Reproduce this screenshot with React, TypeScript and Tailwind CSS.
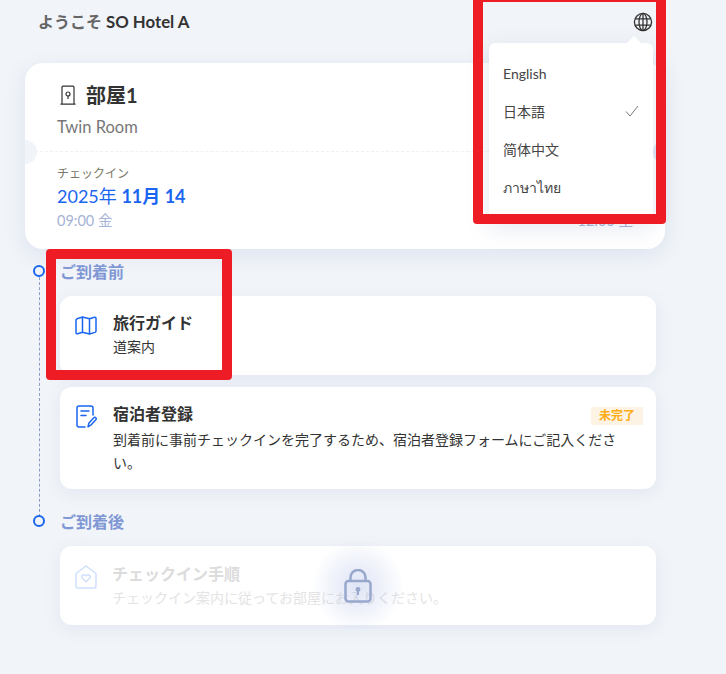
const FONT = "font-['Lato','Noto_Sans_CJK_JP',sans-serif]";

function Globe() {
  return (
    <svg width="20" height="20" viewBox="0 0 20 20" fill="none" stroke="#333" strokeWidth="1.3">
      <circle cx="10" cy="10" r="8.6" />
      <ellipse cx="10" cy="10" rx="4" ry="8.6" />
      <path d="M10 1.4v17.2M2.2 6.8h15.6M2.2 13.2h15.6" />
    </svg>
  );
}
function Door() {
  return (
    <svg width="16" height="20" viewBox="0 0 16 20" fill="none" stroke="#333" strokeWidth="1.2">
      <path d="M2 19V2.2a1 1 0 0 1 1-1h10a1 1 0 0 1 1 1V19M0.5 19.2h15" />
      <circle cx="8" cy="9" r="2" />
      <path d="M8 11v3" />
    </svg>
  );
}
function MapIcon() {
  return (
    <svg width="22" height="19" viewBox="0 0 22 19" fill="none" stroke="#1a66f0" strokeWidth="1.5" strokeLinejoin="round">
      <path d="M1 4.2c0-.8.5-1.300 1.200-1.500L7.500 1l7 1.800 5-1.600c.8-.2 1.500.3 1.500 1.100V15c0 .7-.4 1.200-1 1.400L14.500 18l-7-1.800-5 1.600C1.700 18 1 17.500 1 16.700zM7.500 1v15.200M14.500 2.800V18" />
    </svg>
  );
}
function FormIcon() {
  return (
    <svg width="21" height="23" viewBox="0 0 21 23" fill="none" stroke="#1a66f0" strokeWidth="1.5" strokeLinecap="round" strokeLinejoin="round">
      <path d="M9 22H3a2 2 0 0 1-2-2V3a2 2 0 0 1 2-2h12a2 2 0 0 1 2 2v7" />
      <path d="M5 6h8M5 10.500h5" />
      <path d="M12 21.800l.8-3.500 5-5.500c.6-.6 1.500-.6 2 0 .5.500.5 1.300 0 1.900l-5 5.500z" />
    </svg>
  );
}
function HouseHeart() {
  return (
    <svg width="22" height="24" viewBox="0 0 22 24" fill="none" stroke="#cfdffb" strokeWidth="1.5" strokeLinejoin="round">
      <path d="M1 8.500L11 1l10 7.500V21a2 2 0 0 1-2 2H3a2 2 0 0 1-2-2z" />
      <path d="M11 16.800l-3.700-3.600c-1.800-2 .9-4.700 3.700-2.400 2.800-2.300 5.500.4 3.700 2.400z" />
    </svg>
  );
}
function Lock() {
  return (
    <svg width="28" height="34" viewBox="0 0 28 34" fill="none" stroke="#98a7cc" strokeWidth="2.500">
      <rect x="1.500" y="12" width="25" height="20.500" rx="3" />
      <path d="M6.500 12V8.500a7.500 7.500 0 0 1 15 0V12" />
      <circle cx="14" cy="20.500" r="2.400" fill="#98a7cc" stroke="none" />
      <path d="M14 21v5" strokeWidth="2" />
    </svg>
  );
}

function Dot() {
  return <span className="absolute left-[-27px] top-[5px] h-3 w-3 rounded-full border-2 border-[#1a66f0] bg-[#f1f4f8]" />;
}

const shadow = "shadow-[0_4px_16px_rgba(120,140,200,0.12)]";

export default function App() {
  return (
    <div className={`relative h-[674px] w-[726px] overflow-hidden bg-[#f1f4f8] ${FONT}`}>
      <header className="flex h-[43px] items-center justify-between pl-[38px] pr-[73px]">
        <p className="text-[16px] font-semibold text-[#666]">
          ようこそ <span className="text-[16.800px] font-bold text-[#333]">SO Hotel A</span>
        </p>
        <div className="mt-[1px]"><Globe /></div>
      </header>

      <section className="relative mx-[25px] mt-[20px] h-[186px] w-[640px] rounded-[18px] bg-white shadow-[0_6px_20px_rgba(120,140,200,0.16)]">
        <div className="flex h-[89px] flex-col border-b border-dashed border-[#eef1f6] pl-[32px] pt-[19px]">
          <div className="flex items-center gap-[10px] pl-[3px]">
            <Door />
            <h1 className="text-[20px] leading-[26px] font-bold text-[#333]">部屋1</h1>
          </div>
          <p className="mt-[9px] text-[16.500px] leading-[20px] text-[#777]">Twin Room</p>
        </div>
        <span className="absolute left-0 top-[77px] h-6 w-3 rounded-r-full bg-[#f1f4f8]" />
        <span className="absolute right-0 top-[77px] h-6 w-3 rounded-l-full bg-[#dfe5f1]" />
        <div className="flex items-start justify-between pl-[32px] pr-[32px] pt-[15px]">
          <div>
            <p className="text-[12px] leading-[13px] text-[#776]">チェックイン</p>
            <p className="mt-[3px] text-[18px] leading-[26px] text-[#1a66f0]">
              2025年 <span className="font-bold">11月 14</span>
            </p>
            <p className="mt-[2px] text-[14.500px] leading-[20px] text-[#a7b3d6]">09:00 金</p>
          </div>
          <p className="mt-[44px] text-[14.500px] leading-[20px] text-[#a7b3d6]">12:00 土</p>
        </div>
      </section>

      <main className="relative ml-[60px] mr-[70px] mt-[11px]">
        <span className="absolute left-[-21px] top-[12px] h-[250px] border-l border-dashed border-[#8f9bc2]" />

        <div className="relative">
          <Dot />
          <h2 className="text-[16px] leading-[24px] font-bold text-[#7f97d4]">ご到着前</h2>
        </div>

        <article className={`mt-[12px] flex h-[79px] gap-[16px] rounded-[12px] bg-white pl-[15px] pt-[17px] ${shadow}`}>
          <div className="pt-[3px]"><MapIcon /></div>
          <div>
            <h3 className="text-[16px] leading-[20px] font-bold text-[#333]">旅行ガイド</h3>
            <p className="mt-[5px] text-[14px] leading-[18px] text-[#333]">道案内</p>
          </div>
        </article>

        <article className={`relative mt-[12px] flex h-[102px] gap-[16px] rounded-[12px] bg-white pl-[16px] pr-[24px] pt-[17px] ${shadow}`}>
          <div className="pt-[1px]"><FormIcon /></div>
          <div className="min-w-0 flex-1">
            <h3 className="text-[16px] leading-[20px] font-bold text-[#333]">宿泊者登録</h3>
            <p className="mt-[4px] text-[14px] leading-[23px] text-[#333]">
              到着前に事前チェックインを完了するため、宿泊者登録フォームにご記入ください。
            </p>
          </div>
          <span className="absolute right-[13px] top-[20px] bg-[#fdf3e4] px-[8px] text-[12px] leading-[18px] font-semibold text-[#ffad14]">未完了</span>
        </article>

        <div className="relative mt-[21px]">
          <Dot />
          <h2 className="text-[16px] leading-[24px] font-bold text-[#7f97d4]">ご到着後</h2>
        </div>

        <article className={`relative mt-[12px] flex h-[79px] gap-[15px] rounded-[12px] bg-white pl-[15px] pt-[18px] ${shadow}`}>
          <div className="pt-[1px]"><HouseHeart /></div>
          <div>
            <h3 className="text-[16px] leading-[20px] font-bold text-[#dcdcdc]">チェックイン手順</h3>
            <p className="mt-[5px] text-[14px] leading-[18px] text-[#e4e4e4]">チェックイン案内に従ってお部屋にお入りください。</p>
          </div>
          <div className="absolute left-[248px] top-[-10px] flex h-[100px] w-[100px] items-center justify-center rounded-full bg-[radial-gradient(circle,rgba(160,176,226,0.34)_0%,rgba(160,176,226,0.14)_40%,rgba(160,176,226,0)_65%)]">
            <Lock />
          </div>
        </article>
      </main>

      {/* language menu */}
      <div className="absolute left-[489px] top-[43px] h-[176px] w-[164px] rounded-[6px] bg-white pt-[12px] shadow-[0_8px_24px_rgba(100,120,170,0.18)]">
        <span className="absolute right-[14px] top-[-5px] h-[10px] w-[10px] rotate-45 bg-white" />
        <ul className="text-[14px] text-[#444]">
          <li className="flex h-[38px] items-center pl-[14px] pb-[2px]">English</li>
          <li className="flex h-[38px] items-center justify-between pl-[14px] pr-[14px] pb-[2px]">
            日本語
            <svg width="14" height="12" viewBox="0 0 14 12" fill="none" stroke="#777" strokeWidth="1">
              <path d="M1 6.500L5 11 13 1" />
            </svg>
          </li>
          <li className="flex h-[38px] items-center pl-[14px] pb-[1px] font-['Noto_Sans_CJK_SC',sans-serif]">简体中文</li>
          <li className="flex h-[38px] items-center pl-[14px] pb-[1px] font-['Noto_Sans','DejaVu_Sans',sans-serif]">ภาษาไทย</li>
        </ul>
      </div>

      {/* annotation boxes */}
      <div className="absolute left-[473px] top-[-8px] h-[232px] w-[193px] rounded-[4px] border-[10px] border-[#ee1c25]" />
      <div className="absolute left-[46px] top-[249px] h-[131px] w-[186px] rounded-[4px] border-[10px] border-[#ee1c25]" />
    </div>
  );
}
